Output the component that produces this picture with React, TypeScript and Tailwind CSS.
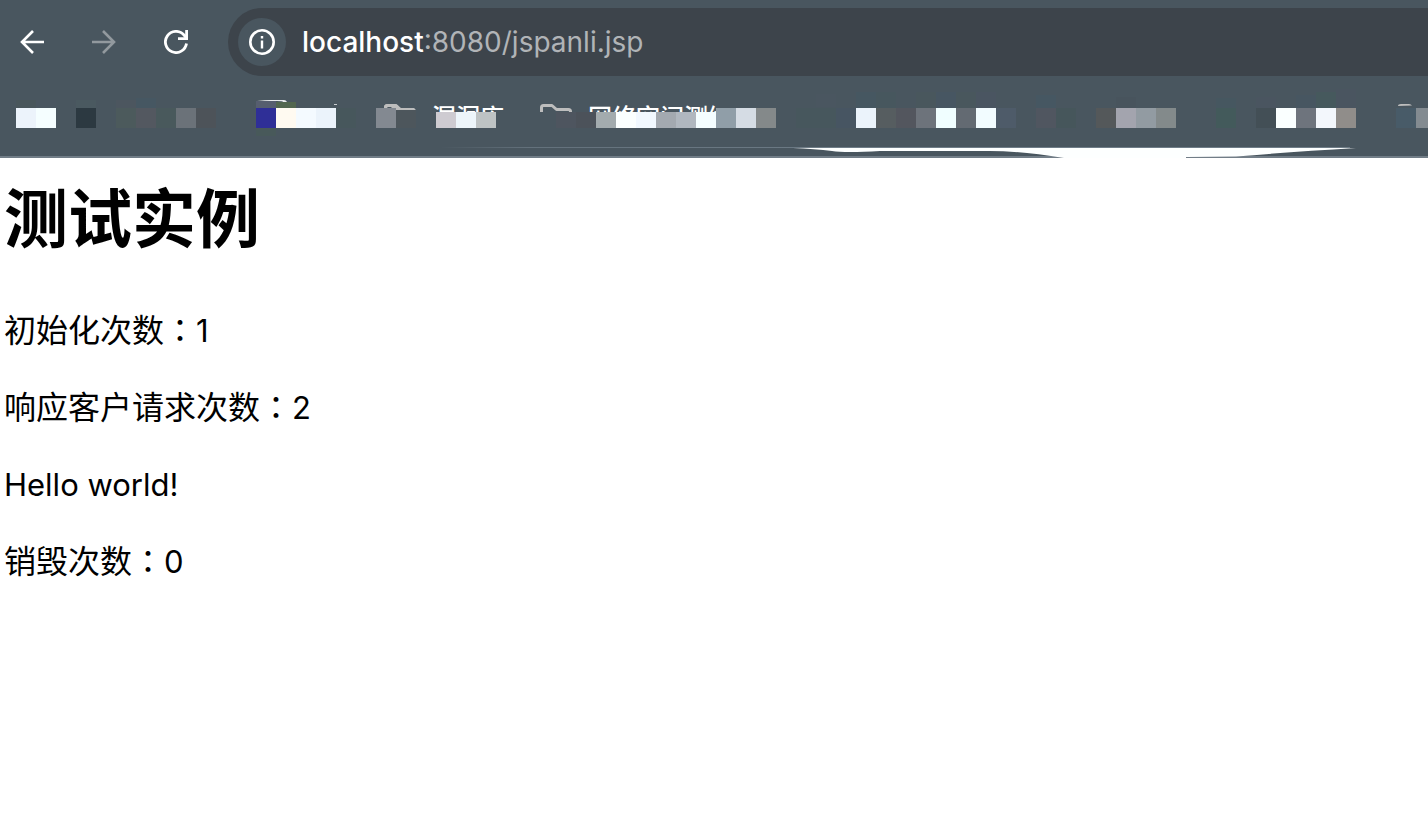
import React from "react";

type Tile = [x: number, y: number, w: number, h: number, fill: string];

const faintTiles: Tile[] = [
  [16, 100, 20, 8, "#49565a"],
  [36, 100, 20, 8, "#4b5662"],
  [76, 100, 20, 8, "#4c5b62"],
  [116, 100, 20, 8, "#4e5660"],
  [136, 98, 20, 10, "#455964"],
  [816, 94, 20, 13, "#4c5661"],
  [856, 92, 20, 16, "#455963"],
  [876, 92, 20, 16, "#46595e"],
  [916, 92, 20, 16, "#49595d"],
  [936, 92, 20, 16, "#475764"],
  [956, 92, 20, 16, "#49595d"],
  [976, 92, 20, 16, "#4c5563"],
  [796, 108, 40, 20, "#46595c"],
  [1036, 95, 20, 13, "#455964"],
  [1116, 97, 20, 11, "#48545c"],
  [1216, 98, 20, 10, "#455962"],
  [1256, 97, 20, 11, "#4b5561"],
  [1296, 95, 20, 13, "#475763"],
  [1316, 92, 20, 16, "#455b5c"],
  [1336, 89, 20, 19, "#4b5561"],
  [256, 128, 20, 8, "#485b58"],
  [336, 108, 20, 20, "#47585b"],
];

const tiles: Tile[] = [
  [16, 108, 20, 20, "#ecf3fb"],
  [36, 108, 20, 20, "#f5feff"],
  [76, 108, 20, 20, "#2c3941"],
  [116, 108, 20, 20, "#4c5a5c"],
  [136, 108, 20, 20, "#535860"],
  [156, 108, 20, 20, "#49595c"],
  [176, 108, 20, 20, "#6b7279"],
  [196, 108, 20, 20, "#4d5359"],
  [256, 101, 20, 7, "#565e6f"],
  [276, 102, 20, 6, "#52664f"],
  [256, 108, 20, 20, "#2f2f97"],
  [276, 108, 20, 20, "#fffaf1"],
  [296, 108, 20, 20, "#f4faff"],
  [316, 108, 20, 20, "#ebf3fb"],
  [376, 108, 20, 20, "#838991"],
  [396, 110, 20, 18, "#4d565c"],
  [436, 112, 20, 16, "#cecbd1"],
  [456, 112, 20, 16, "#edf5fa"],
  [476, 112, 20, 16, "#bec3c4"],
  [556, 112, 20, 16, "#4e555f"],
  [576, 112, 20, 16, "#4c525a"],
  [596, 112, 20, 16, "#a3abae"],
  [616, 112, 20, 16, "#fbffff"],
  [636, 112, 20, 16, "#f1f8ff"],
  [656, 112, 20, 16, "#a3a9b0"],
  [676, 112, 20, 16, "#b0b7bf"],
  [696, 112, 20, 16, "#f4fdff"],
  [716, 108, 20, 20, "#909ea8"],
  [736, 108, 20, 20, "#d5dce4"],
  [756, 108, 20, 20, "#84898a"],
  [836, 108, 20, 20, "#475562"],
  [856, 108, 20, 20, "#ebf3fb"],
  [876, 108, 20, 20, "#565d60"],
  [896, 108, 20, 20, "#53565e"],
  [916, 108, 20, 20, "#6d737b"],
  [936, 108, 20, 20, "#f0feff"],
  [956, 108, 20, 20, "#636a72"],
  [976, 108, 20, 20, "#f2fcff"],
  [996, 108, 20, 20, "#4e5b69"],
  [1036, 108, 20, 20, "#505660"],
  [1056, 108, 20, 20, "#46565b"],
  [1096, 108, 20, 20, "#54585a"],
  [1116, 108, 20, 20, "#a3a4ae"],
  [1136, 108, 20, 20, "#929ba2"],
  [1156, 108, 20, 20, "#838a8b"],
  [1216, 108, 20, 20, "#435a5b"],
  [1256, 108, 20, 20, "#434f56"],
  [1276, 108, 20, 20, "#faffff"],
  [1296, 108, 20, 20, "#6e747d"],
  [1316, 108, 20, 20, "#f3f7fc"],
  [1336, 108, 20, 20, "#908d8a"],
  [1396, 108, 20, 20, "#485b68"],
  [1416, 108, 20, 20, "#838b91"],
];

function BackIcon() {
  return (
    <svg width="24" height="24" viewBox="0 0 24 24" fill="none" stroke="currentColor" strokeWidth="2.6" aria-hidden="true">
      <path d="M24 12H2M13 1L2 12l11 11" />
    </svg>
  );
}

function ForwardIcon() {
  return (
    <svg width="24" height="24" viewBox="0 0 24 24" fill="none" stroke="currentColor" strokeWidth="2.6" aria-hidden="true">
      <path d="M0 12h22M11 1l11 11-11 11" />
    </svg>
  );
}

function ReloadIcon() {
  return (
    <svg width="24" height="24" viewBox="0 0 24 24" fill="none" stroke="currentColor" strokeWidth="2.8" aria-hidden="true">
      <path d="M22.500 13.500A10.600 10.600 0 1 1 20 5L22.500 8" />
      <path d="M22.600 0v8.600H14" />
    </svg>
  );
}

function InfoIcon() {
  return (
    <svg width="26" height="26" viewBox="0 0 26 26" fill="none" stroke="currentColor" aria-hidden="true">
      <circle cx="13" cy="13" r="11.700" strokeWidth="2.600" />
      <path d="M13 11.500v8M13 7v2.400" strokeWidth="2.400" />
    </svg>
  );
}

function FolderIcon() {
  return (
    <svg width="32" height="26" viewBox="0 0 32 26" fill="none" stroke="#bdbdbd" strokeWidth="3" strokeLinejoin="round" aria-hidden="true">
      <path d="M1.500 23V3.500q0-2 2-2h8.500l4.500 4H28.500q2 0 2 2V23z" />
    </svg>
  );
}

function Mosaic() {
  return (
    <svg className="pointer-events-none absolute top-0 left-0" width="1428" height="74" viewBox="0 84 1428 74" aria-hidden="true">
      <defs>
        <linearGradient id="streak" x1="0" x2="1">
          <stop offset="0" stopColor="#6f7d88" stopOpacity="0" />
          <stop offset="0.25" stopColor="#6f7d88" stopOpacity="0.700" />
          <stop offset="1" stopColor="#6f7d88" stopOpacity="0.900" />
        </linearGradient>
      </defs>
      <g opacity="0.600">
        {faintTiles.map(([x, y, w, h, fill]) => (
          <rect key={`${x}-${y}`} x={x} y={y} width={w} height={h} fill={fill} />
        ))}
      </g>
      {tiles.map(([x, y, w, h, fill]) => (
        <rect key={`${x}-${y}`} x={x} y={y} width={w} height={h} fill={fill} />
      ))}
      <path d="M257 101q8-1 14-1h13q2 0 3 2h-4q0-1-6-1z" fill="#e8eaec" />
      <path d="M334 104h3v1h-3z" fill="#c8cccf" />
      <path d="M384 108v-1q0-3 4-3h7q2 0 3 1.500l2 2.500h14l1 2h-19v-2h-4l-1.500-1.500H388l-1 1.500z" fill="#bdbdbd" />
      <path d="M1398 106q0-2 3-2h8q2 0 3 1.500z" fill="#bdbdbd" />
      <rect x="440" y="147" width="360" height="1" fill="url(#streak)" />
      <path d="M800 147h550v1H800z" fill="#6f7d88" />
      <path d="M793 148H1356Q1290 152 1236 156.500L1186 157v1H1064Q1020 151 990 151H880Q845 153 832 151Q815 149 793 148z" fill="#fdffff" />
    </svg>
  );
}

function Count({ label, value }: { label: string; value: number }) {
  return (
    <p>
      {label}
      <span className="font-['Noto_Sans_CJK_TC',sans-serif]" lang="zh-TW">：</span>
      <span className="font-['Inter',sans-serif] text-[31px] leading-none">{value}</span>
    </p>
  );
}

export default function App() {
  return (
    <div className="min-h-screen overflow-x-hidden bg-white text-black">
      <header className="bg-[#49565f]">
        <nav className="flex items-center pt-2 pl-5" aria-label="Browser">
          <button type="button" aria-label="Back" className="mr-12 text-white"><BackIcon /></button>
          <button type="button" aria-label="Forward" disabled className="mr-12 text-[#92999e]"><ForwardIcon /></button>
          <button type="button" aria-label="Reload" className="mr-10 text-white"><ReloadIcon /></button>
          <div className="flex h-[68px] flex-1 items-center rounded-l-full bg-[#3d444b] pl-[10px]">
            <button type="button" aria-label="Site information" className="mr-4 flex size-12 items-center justify-center rounded-full bg-[#49565f] text-white">
              <InfoIcon />
            </button>
            <div className="font-['Inter',sans-serif] text-[28px] leading-9 text-[#b1b4b7]">
              <span className="font-medium text-white">localhost</span>:8080/jspanli.jsp
            </div>
          </div>
        </nav>
        <div className="relative h-[82px] border-b-2 border-[#717d87] pt-2">
          <div className="flex h-7 items-start overflow-hidden pt-3 pl-[384px] font-['Noto_Sans_CJK_SC',sans-serif] text-[24px] leading-6 font-medium whitespace-nowrap text-white">
            <a href="#vulnerabilities" className="mr-9 flex gap-4 pt-2"><FolderIcon />漏洞库</a>
            <a href="#mapping" className="flex gap-4 pt-2"><FolderIcon /><span className="w-[130px] overflow-hidden">网络空间测绘</span></a>
          </div>
          <div className="absolute inset-x-0 top-2 h-[74px] overflow-hidden"><Mosaic /></div>
        </div>
      </header>
      <main className="pl-1 font-['Noto_Sans_CJK_SC',sans-serif]">
        <h1 className="mt-3 mb-12 text-[64px] leading-[88px] font-bold">测试实例</h1>
        <div className="flex flex-col gap-8 text-[32px] leading-[45px]">
          <Count label="初始化次数" value={1} />
          <Count label="响应客户请求次数" value={2} />
          <p><span className="font-['Inter',sans-serif] text-[31px] leading-none">Hello world!</span></p>
          <Count label="销毁次数" value={0} />
        </div>
      </main>
    </div>
  );
}
